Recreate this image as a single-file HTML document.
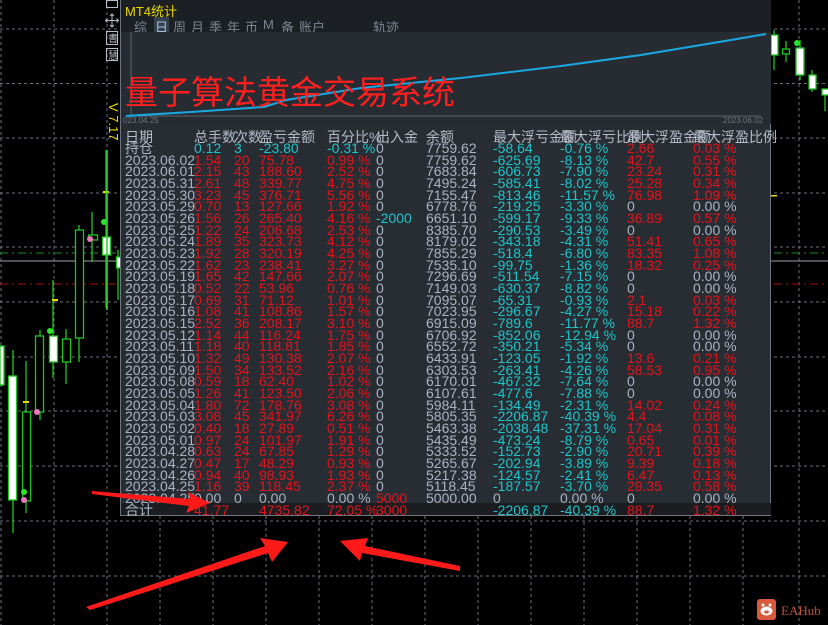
<!DOCTYPE html>
<html><head><meta charset="utf-8"><style>
*{margin:0;padding:0;box-sizing:border-box}
body{width:828px;height:625px;background:#000;position:relative;overflow:hidden;font-family:"Liberation Sans","Noto Sans CJK SC",sans-serif}
svg{position:absolute;left:0;top:0}
#panel{position:absolute;left:120px;top:0;width:651px;height:516px;background:#282c33;border-left:1px solid #6c7480;border-right:1px solid #6c7480;border-bottom:1px solid #6c7480}
#tb{position:absolute;left:0;top:0;width:650px;height:32px;background:#1c1f24}
.t{position:absolute;font-size:13px;color:#7d8590;top:17px}
.r{position:absolute;left:-120px;width:828px;height:12px;line-height:12px;font-size:14px;color:#aab4c3;white-space:nowrap}
.r span{position:absolute;top:0}
.p1{left:124px}.p2{left:193px}.p3{left:233px}.p4{left:258px}.p5{left:326px}.p6{left:375px}.p7{left:425px}.p8{left:492px}.p9{left:559px}.p10{left:626px}.p11{left:692px}
.R{color:#e3141b}.C{color:#1ec5cb}
.h{color:#b4bcc7;font-size:14px}
</style></head><body>
<svg width="828" height="625">
<g stroke="#6a6f78" stroke-width="1" stroke-dasharray="3,3">
<path d="M1 0V625M54 0V625M107 0V625M160 0V625M213 0V625M266 0V625M319 0V625M372 0V625M425 0V625M478 0V625M531 0V625M584 0V625M637 0V625M690 0V625M743 0V625M799 0V625"/>
<path d="M0 29H828M0 83.5H828M0 138H828M0 193H828M0 247H828M0 302H828M0 357H828M0 411H828M0 466H828M0 521H828M0 576H828"/>
</g>
<path d="M0 253H828" stroke="#1f8a2a" stroke-dasharray="8,4,2,4"/>
<path d="M0 261H828" stroke="#9aa0a8"/>
<path d="M0 284H828" stroke="#a01010" stroke-dasharray="8,4,2,4"/>
<g stroke="#1fc41f" stroke-width="1.3" fill="none">
<path d="M13 350V533M26 361V513M40 330V420M53 280V378M66 329V384M79 225V362M92 212V262M106 150V308M107 150V310M118 250V300"/>
<path d="M774 30V70M786 41V62M800 40V80M812 70V92M825 89V111"/>
</g>
<g stroke="#1fc41f" stroke-width="1.3">
<rect x="0" y="346" width="4" height="39" fill="#fff"/>
<rect x="8.5" y="376" width="8" height="124" fill="#fff"/>
<rect x="22.5" y="412" width="8" height="89" fill="#000"/>
<rect x="35.5" y="336" width="8" height="76" fill="#000"/>
<rect x="49.5" y="336" width="8" height="26" fill="#fff"/>
<rect x="62.5" y="339" width="8" height="23" fill="#000"/>
<rect x="75.5" y="230" width="8" height="108" fill="#000"/>
<rect x="88.5" y="235" width="9" height="5" fill="#000"/>
<rect x="102.5" y="237" width="8" height="18" fill="#fff"/>
<rect x="116.5" y="257" width="5" height="11" fill="#fff"/>
<rect x="771" y="35" width="7" height="20" fill="#fff"/>
<rect x="782.5" y="49" width="7" height="5" fill="#000"/>
<rect x="796" y="48" width="8" height="27" fill="#fff"/>
<rect x="809" y="75" width="7" height="14" fill="#fff"/>
<rect x="822" y="89" width="7" height="6" fill="#fff"/>
</g>
<g fill="#e8d800"><rect x="23" y="401" width="6" height="2"/><rect x="52" y="299" width="6" height="2"/><rect x="103" y="191" width="6" height="2"/><rect x="771" y="195" width="6" height="1.5"/></g>
<g><circle cx="24" cy="492" r="3" fill="#2be32b"/><circle cx="24" cy="500" r="3" fill="#ee77bb"/><circle cx="37" cy="412" r="3" fill="#ee77bb"/><circle cx="50" cy="331" r="3" fill="#2be32b"/><circle cx="90" cy="239" r="3" fill="#ee77bb"/><circle cx="104" cy="222" r="3" fill="#2be32b"/><circle cx="797" cy="43" r="3" fill="#2be32b"/></g>
<path d="M107 150V310" stroke="#2bd22b" stroke-width="1.5"/>
<g fill="none" stroke="#b8bec6" stroke-width="1">
<rect x="106.5" y="0.5" width="11" height="7"/><rect x="106.5" y="31.5" width="11" height="13"/><rect x="106.5" y="48.5" width="11" height="12"/>
<path d="M112 14V27M105.5 20.5H118.5M110 16L112 14L114 16M110 25L112 27L114 25M107.5 18.5L105.5 20.5L107.5 22.5M116.5 18.5L118.5 20.5L116.5 22.5"/>
</g>
<text x="108" y="42" font-size="10" fill="#b8bec6" font-family="Noto Sans CJK SC">書</text>
<text x="108" y="59" font-size="10" fill="#b8bec6" font-family="Noto Sans CJK SC">慧</text>
<text transform="translate(109,103) rotate(90)" font-size="13" fill="#e8d800" font-family="Liberation Sans">V 7.17</text>
<g transform="translate(757,599)"><rect width="19" height="21" rx="3" fill="#d85a3a"/><ellipse cx="9.5" cy="12" rx="6" ry="4.5" fill="#fff"/><circle cx="6" cy="6" r="1.5" fill="#fff"/><circle cx="13" cy="6" r="1.5" fill="#fff"/><ellipse cx="9.5" cy="13" rx="2.5" ry="1.6" fill="#d85a3a"/></g>
<text x="781" y="615" font-size="13" fill="#c0533a" font-family="Liberation Serif">EAHub</text>
</svg>

<div id="panel">
<div id="tb"></div>
<div style="position:absolute;left:4px;top:1px;font-size:13px;color:#e8d800">MT4统计</div>
<div class="t" style="left:13px">综</div>
<div class="t" style="left:33px;color:#a9c3dc;background:#33404e;padding:0 1px">日</div>
<div class="t" style="left:52px">周</div>
<div class="t" style="left:70px">月</div>
<div class="t" style="left:88px">季</div>
<div class="t" style="left:106px">年</div>
<div class="t" style="left:124px">币</div>
<div class="t" style="left:142px">M</div>
<div class="t" style="left:160px">备</div>
<div class="t" style="left:178px">账户</div>
<div class="t" style="left:252px">轨迹</div>
<div style="position:absolute;left:0;top:32px;width:650px;height:92px;background:#272b32"></div>
<svg width="651" height="130" style="position:absolute;left:0;top:0">
<path d="M10 32V116H640" stroke="#5b626c" fill="none"/>
<polyline points="5,116 70,112 143,107 165,100 240,88 340,78 440,66 520,55 580,45 610,40 645,34" fill="none" stroke="#1aa8e2" stroke-width="2"/>
<text x="2" y="123" font-size="8" fill="#6d7580" font-family="Liberation Sans">023.04.25</text>
<text x="602" y="123" font-size="8" fill="#6d7580" font-family="Liberation Sans">2023.06.02</text>
</svg>
<div style="position:absolute;left:4px;top:70px;font-size:33px;line-height:40px;color:#ff1f1f;font-family:'Noto Sans CJK SC',sans-serif">量子算法黄金交易系统</div>
<div style="position:absolute;left:0;top:503px;width:650px;height:12px;background:#1b1d21"></div>

<div class="r h" style="top:131px"><span class="p1">日期</span><span class="p2">总手数</span><span class="p3">次数</span><span class="p4">盈亏金额</span><span class="p5">百分比%</span><span class="p6">出入金</span><span class="p7">余额</span><span class="p8">最大浮亏金额</span><span class="p9">最大浮亏比例</span><span class="p10">最大浮盈金额</span><span class="p11">最大浮盈比例</span></div>
<div class="r" style="top:142px"><span class="p1">持仓</span><span class="p2 C">0.12</span><span class="p3 C">3</span><span class="p4 C">-23.80</span><span class="p5 C">-0.31 %</span><span class="p6">0</span><span class="p7">7759.62</span><span class="p8 C">-58.64</span><span class="p9 C">-0.76 %</span><span class="p10 R">2.66</span><span class="p11 R">0.03 %</span></div>
<div class="r" style="top:153.7px"><span class="p1">2023.06.02</span><span class="p2 R">1.54</span><span class="p3 R">20</span><span class="p4 R">75.78</span><span class="p5 R">0.99 %</span><span class="p6">0</span><span class="p7">7759.62</span><span class="p8 C">-625.69</span><span class="p9 C">-8.13 %</span><span class="p10 R">42.7</span><span class="p11 R">0.55 %</span></div>
<div class="r" style="top:165.3px"><span class="p1">2023.06.01</span><span class="p2 R">2.15</span><span class="p3 R">43</span><span class="p4 R">188.60</span><span class="p5 R">2.52 %</span><span class="p6">0</span><span class="p7">7683.84</span><span class="p8 C">-606.73</span><span class="p9 C">-7.90 %</span><span class="p10 R">23.24</span><span class="p11 R">0.31 %</span></div>
<div class="r" style="top:177px"><span class="p1">2023.05.31</span><span class="p2 R">2.61</span><span class="p3 R">48</span><span class="p4 R">339.77</span><span class="p5 R">4.75 %</span><span class="p6">0</span><span class="p7">7495.24</span><span class="p8 C">-585.41</span><span class="p9 C">-8.02 %</span><span class="p10 R">25.28</span><span class="p11 R">0.34 %</span></div>
<div class="r" style="top:188.6px"><span class="p1">2023.05.30</span><span class="p2 R">3.23</span><span class="p3 R">45</span><span class="p4 R">376.71</span><span class="p5 R">5.56 %</span><span class="p6">0</span><span class="p7">7155.47</span><span class="p8 C">-813.46</span><span class="p9 C">-11.57 %</span><span class="p10 R">76.98</span><span class="p11 R">1.09 %</span></div>
<div class="r" style="top:200.3px"><span class="p1">2023.05.29</span><span class="p2 R">0.70</span><span class="p3 R">13</span><span class="p4 R">127.66</span><span class="p5 R">1.92 %</span><span class="p6">0</span><span class="p7">6778.76</span><span class="p8 C">-219.25</span><span class="p9 C">-3.30 %</span><span class="p10">0</span><span class="p11">0.00 %</span></div>
<div class="r" style="top:212px"><span class="p1">2023.05.26</span><span class="p2 R">1.56</span><span class="p3 R">26</span><span class="p4 R">265.40</span><span class="p5 R">4.16 %</span><span class="p6 C">-2000</span><span class="p7">6651.10</span><span class="p8 C">-599.17</span><span class="p9 C">-9.33 %</span><span class="p10 R">36.89</span><span class="p11 R">0.57 %</span></div>
<div class="r" style="top:223.6px"><span class="p1">2023.05.25</span><span class="p2 R">1.22</span><span class="p3 R">24</span><span class="p4 R">206.68</span><span class="p5 R">2.53 %</span><span class="p6">0</span><span class="p7">8385.70</span><span class="p8 C">-290.53</span><span class="p9 C">-3.49 %</span><span class="p10">0</span><span class="p11">0.00 %</span></div>
<div class="r" style="top:235.3px"><span class="p1">2023.05.24</span><span class="p2 R">1.89</span><span class="p3 R">35</span><span class="p4 R">323.73</span><span class="p5 R">4.12 %</span><span class="p6">0</span><span class="p7">8179.02</span><span class="p8 C">-343.18</span><span class="p9 C">-4.31 %</span><span class="p10 R">51.41</span><span class="p11 R">0.65 %</span></div>
<div class="r" style="top:246.9px"><span class="p1">2023.05.23</span><span class="p2 R">1.92</span><span class="p3 R">28</span><span class="p4 R">320.19</span><span class="p5 R">4.25 %</span><span class="p6">0</span><span class="p7">7855.29</span><span class="p8 C">-518.4</span><span class="p9 C">-6.80 %</span><span class="p10 R">83.35</span><span class="p11 R">1.08 %</span></div>
<div class="r" style="top:258.6px"><span class="p1">2023.05.22</span><span class="p2 R">1.62</span><span class="p3 R">23</span><span class="p4 R">238.41</span><span class="p5 R">3.27 %</span><span class="p6">0</span><span class="p7">7535.10</span><span class="p8 C">-99.75</span><span class="p9 C">-1.36 %</span><span class="p10 R">18.32</span><span class="p11 R">0.25 %</span></div>
<div class="r" style="top:270.3px"><span class="p1">2023.05.19</span><span class="p2 R">1.65</span><span class="p3 R">42</span><span class="p4 R">147.66</span><span class="p5 R">2.07 %</span><span class="p6">0</span><span class="p7">7296.69</span><span class="p8 C">-511.54</span><span class="p9 C">-7.15 %</span><span class="p10">0</span><span class="p11">0.00 %</span></div>
<div class="r" style="top:281.9px"><span class="p1">2023.05.18</span><span class="p2 R">0.52</span><span class="p3 R">22</span><span class="p4 R">53.96</span><span class="p5 R">0.76 %</span><span class="p6">0</span><span class="p7">7149.03</span><span class="p8 C">-630.37</span><span class="p9 C">-8.82 %</span><span class="p10">0</span><span class="p11">0.00 %</span></div>
<div class="r" style="top:293.6px"><span class="p1">2023.05.17</span><span class="p2 R">0.69</span><span class="p3 R">31</span><span class="p4 R">71.12</span><span class="p5 R">1.01 %</span><span class="p6">0</span><span class="p7">7095.07</span><span class="p8 C">-65.31</span><span class="p9 C">-0.93 %</span><span class="p10 R">2.1</span><span class="p11 R">0.03 %</span></div>
<div class="r" style="top:305.2px"><span class="p1">2023.05.16</span><span class="p2 R">1.08</span><span class="p3 R">41</span><span class="p4 R">108.86</span><span class="p5 R">1.57 %</span><span class="p6">0</span><span class="p7">7023.95</span><span class="p8 C">-296.67</span><span class="p9 C">-4.27 %</span><span class="p10 R">15.18</span><span class="p11 R">0.22 %</span></div>
<div class="r" style="top:316.9px"><span class="p1">2023.05.15</span><span class="p2 R">2.52</span><span class="p3 R">36</span><span class="p4 R">208.17</span><span class="p5 R">3.10 %</span><span class="p6">0</span><span class="p7">6915.09</span><span class="p8 C">-789.6</span><span class="p9 C">-11.77 %</span><span class="p10 R">88.7</span><span class="p11 R">1.32 %</span></div>
<div class="r" style="top:328.6px"><span class="p1">2023.05.12</span><span class="p2 R">1.14</span><span class="p3 R">44</span><span class="p4 R">116.24</span><span class="p5 R">1.75 %</span><span class="p6">0</span><span class="p7">6706.92</span><span class="p8 C">-852.06</span><span class="p9 C">-12.94 %</span><span class="p10">0</span><span class="p11">0.00 %</span></div>
<div class="r" style="top:340.2px"><span class="p1">2023.05.11</span><span class="p2 R">1.18</span><span class="p3 R">40</span><span class="p4 R">118.81</span><span class="p5 R">1.85 %</span><span class="p6">0</span><span class="p7">6552.72</span><span class="p8 C">-350.21</span><span class="p9 C">-5.34 %</span><span class="p10">0</span><span class="p11">0.00 %</span></div>
<div class="r" style="top:351.9px"><span class="p1">2023.05.10</span><span class="p2 R">1.32</span><span class="p3 R">49</span><span class="p4 R">130.38</span><span class="p5 R">2.07 %</span><span class="p6">0</span><span class="p7">6433.91</span><span class="p8 C">-123.05</span><span class="p9 C">-1.92 %</span><span class="p10 R">13.6</span><span class="p11 R">0.21 %</span></div>
<div class="r" style="top:363.5px"><span class="p1">2023.05.09</span><span class="p2 R">1.50</span><span class="p3 R">34</span><span class="p4 R">133.52</span><span class="p5 R">2.16 %</span><span class="p6">0</span><span class="p7">6303.53</span><span class="p8 C">-263.41</span><span class="p9 C">-4.26 %</span><span class="p10 R">58.53</span><span class="p11 R">0.95 %</span></div>
<div class="r" style="top:375.2px"><span class="p1">2023.05.08</span><span class="p2 R">0.59</span><span class="p3 R">18</span><span class="p4 R">62.40</span><span class="p5 R">1.02 %</span><span class="p6">0</span><span class="p7">6170.01</span><span class="p8 C">-467.32</span><span class="p9 C">-7.64 %</span><span class="p10">0</span><span class="p11">0.00 %</span></div>
<div class="r" style="top:386.9px"><span class="p1">2023.05.05</span><span class="p2 R">1.26</span><span class="p3 R">41</span><span class="p4 R">123.50</span><span class="p5 R">2.06 %</span><span class="p6">0</span><span class="p7">6107.61</span><span class="p8 C">-477.6</span><span class="p9 C">-7.88 %</span><span class="p10">0</span><span class="p11">0.00 %</span></div>
<div class="r" style="top:398.5px"><span class="p1">2023.05.04</span><span class="p2 R">1.80</span><span class="p3 R">72</span><span class="p4 R">178.76</span><span class="p5 R">3.08 %</span><span class="p6">0</span><span class="p7">5984.11</span><span class="p8 C">-134.49</span><span class="p9 C">-2.31 %</span><span class="p10 R">14.02</span><span class="p11 R">0.24 %</span></div>
<div class="r" style="top:410.2px"><span class="p1">2023.05.03</span><span class="p2 R">3.08</span><span class="p3 R">45</span><span class="p4 R">341.97</span><span class="p5 R">6.26 %</span><span class="p6">0</span><span class="p7">5805.35</span><span class="p8 C">-2206.87</span><span class="p9 C">-40.39 %</span><span class="p10 R">4.4</span><span class="p11 R">0.08 %</span></div>
<div class="r" style="top:421.8px"><span class="p1">2023.05.02</span><span class="p2 R">0.40</span><span class="p3 R">18</span><span class="p4 R">27.89</span><span class="p5 R">0.51 %</span><span class="p6">0</span><span class="p7">5463.38</span><span class="p8 C">-2038.48</span><span class="p9 C">-37.31 %</span><span class="p10 R">17.04</span><span class="p11 R">0.31 %</span></div>
<div class="r" style="top:433.5px"><span class="p1">2023.05.01</span><span class="p2 R">0.97</span><span class="p3 R">24</span><span class="p4 R">101.97</span><span class="p5 R">1.91 %</span><span class="p6">0</span><span class="p7">5435.49</span><span class="p8 C">-473.24</span><span class="p9 C">-8.79 %</span><span class="p10 R">0.65</span><span class="p11 R">0.01 %</span></div>
<div class="r" style="top:445.2px"><span class="p1">2023.04.28</span><span class="p2 R">0.63</span><span class="p3 R">24</span><span class="p4 R">67.85</span><span class="p5 R">1.29 %</span><span class="p6">0</span><span class="p7">5333.52</span><span class="p8 C">-152.73</span><span class="p9 C">-2.90 %</span><span class="p10 R">20.71</span><span class="p11 R">0.39 %</span></div>
<div class="r" style="top:456.8px"><span class="p1">2023.04.27</span><span class="p2 R">0.47</span><span class="p3 R">17</span><span class="p4 R">48.29</span><span class="p5 R">0.93 %</span><span class="p6">0</span><span class="p7">5265.67</span><span class="p8 C">-202.94</span><span class="p9 C">-3.89 %</span><span class="p10 R">9.39</span><span class="p11 R">0.18 %</span></div>
<div class="r" style="top:468.5px"><span class="p1">2023.04.26</span><span class="p2 R">0.94</span><span class="p3 R">40</span><span class="p4 R">98.93</span><span class="p5 R">1.93 %</span><span class="p6">0</span><span class="p7">5217.38</span><span class="p8 C">-124.57</span><span class="p9 C">-2.41 %</span><span class="p10 R">6.47</span><span class="p11 R">0.13 %</span></div>
<div class="r" style="top:480.1px"><span class="p1">2023.04.25</span><span class="p2 R">1.16</span><span class="p3 R">39</span><span class="p4 R">118.45</span><span class="p5 R">2.37 %</span><span class="p6">0</span><span class="p7">5118.45</span><span class="p8 C">-187.57</span><span class="p9 C">-3.70 %</span><span class="p10 R">29.35</span><span class="p11 R">0.58 %</span></div>
<div class="r" style="top:491.8px"><span class="p1">2023.04.25</span><span class="p2">0.00</span><span class="p3">0</span><span class="p4">0.00</span><span class="p5">0.00 %</span><span class="p6 R">5000</span><span class="p7">5000.00</span><span class="p8">0</span><span class="p9">0.00 %</span><span class="p10">0</span><span class="p11">0.00 %</span></div>
<div class="r" style="top:503.5px"><span class="p1">合计</span><span class="p2 R">41.77</span><span class="p4 R">4735.82</span><span class="p5 R">72.05 %</span><span class="p6 R">3000</span><span class="p8 C">-2206.87</span><span class="p9 C">-40.39 %</span><span class="p10 R">88.7</span><span class="p11 R">1.32 %</span></div>
</div>

<svg width="828" height="625" style="position:absolute;left:0;top:0">
<g fill="#ff1a1a">
<polygon points="92,491 190,499 188,492 210,503 186,513 189,506 92,494"/>
<polygon points="86,607 265,546 260,538 288,542 272,562 268,553 90,610"/>
<polygon points="460,566 365,546 368,538 340,541 360,561 362,553 460,571"/>
</g>
</svg>
</body></html>
